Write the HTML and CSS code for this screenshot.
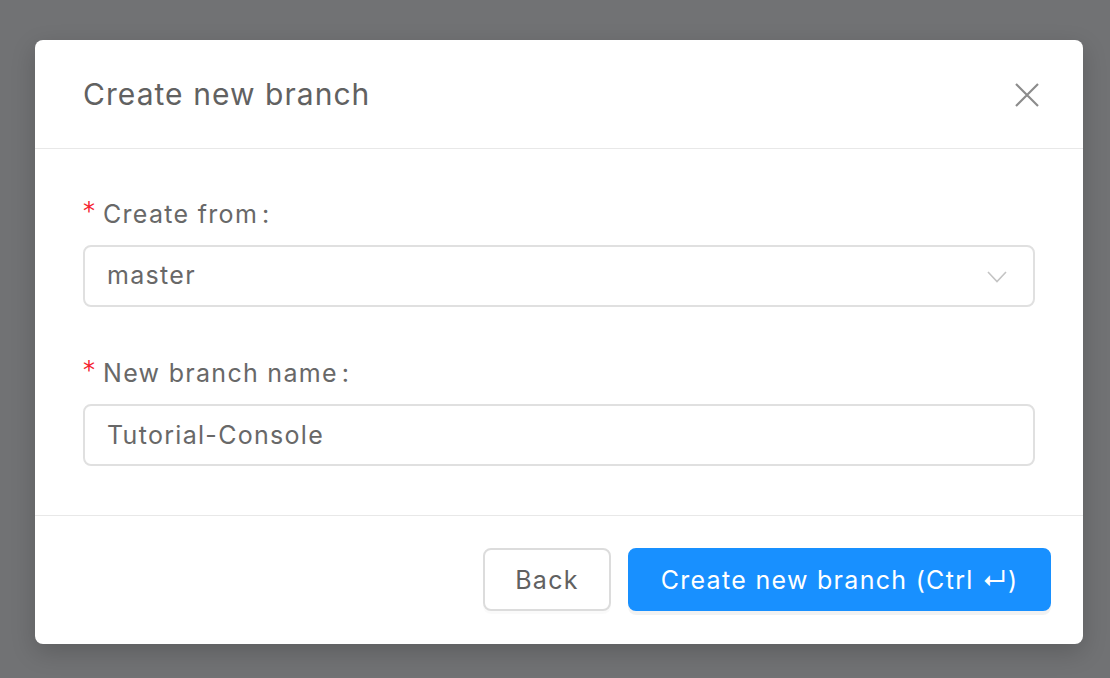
FILE: index.html
```html
<!DOCTYPE html>
<html>
<head>
<meta charset="utf-8">
<link rel="stylesheet" href="styles.css">
</head>
<body>
<div class="modal">
  <div class="modal-header">
    <div class="modal-title">Create new branch</div>
    <button class="modal-close" aria-label="Close">
      <svg width="24" height="24" viewBox="0 0 24 24"><path d="M1 1 L23 23 M23 1 L1 23" stroke="#8c8c8c" stroke-width="2.2" fill="none"/></svg>
    </button>
  </div>
  <div class="modal-body">
    <div class="form-item">
      <div class="form-label"><span class="req">*</span>Create from<span class="colon">:</span></div>
      <div class="select">
        <span class="select-value">master</span>
        <svg class="chevron" width="20" height="12" viewBox="0 0 20 12"><path d="M1 1 L10 10.5 L19 1" stroke="#c4c4c4" stroke-width="1.6" fill="none"/></svg>
      </div>
    </div>
    <div class="form-item second">
      <div class="form-label"><span class="req">*</span>New branch name<span class="colon">:</span></div>
      <div class="input">Tutorial-Console</div>
    </div>
  </div>
  <div class="modal-footer">
    <button class="btn btn-default">Back</button>
    <button class="btn btn-primary">Create new branch (Ctrl ↵)</button>
  </div>
</div>
</body>
</html>
```
FILE: styles.css
```css
html, body {
  margin: 0;
  padding: 0;
}
body {
  background: #717274;
  width: 1110px;
  height: 678px;
  overflow: hidden;
  font-family: Inter, "Noto Sans", sans-serif;
}
.modal {
  margin: 40px 0 0 35px;
  width: 1048px;
  height: 604px;
  background: #fff;
  border-radius: 8px;
  box-shadow: 0 8px 24px rgba(0, 0, 0, 0.18);
  display: flex;
  flex-direction: column;
}
.modal-header {
  height: 108px;
  border-bottom: 1px solid #e8e8e8;
  display: flex;
  align-items: center;
  justify-content: space-between;
  padding: 0 44px 0 48px;
}
.modal-title {
  font-size: 30px;
  letter-spacing: 1.05px;
  color: #616161;
  line-height: 40px;
}
.modal-close {
  border: 0;
  background: none;
  padding: 0;
  width: 24px;
  height: 24px;
  display: flex;
  margin-top: 2px;
}
.modal-body {
  padding: 45px 48px 49px 48px;
  border-bottom: 1px solid #e8e8e8;
}
.form-item.second {
  margin-top: 46px;
}
.form-label {
  font-size: 25px;
  letter-spacing: 1.3px;
  line-height: 40px;
  height: 40px;
  color: #686868;
  margin-bottom: 11px;
  display: flex;
  align-items: center;
}
.req {
  color: #f5222d;
  font-family: "DejaVu Sans", sans-serif;
  font-size: 24px;
  margin-right: 8px;
  position: relative;
  top: -3px;
  letter-spacing: 0;
}
.colon {
  margin-left: 4px;
}
.select, .input {
  height: 62px;
  box-sizing: border-box;
  border: 2px solid #e0e0e0;
  border-radius: 8px;
  display: flex;
  align-items: center;
  padding: 0 22px;
  font-size: 25px;
  letter-spacing: 1.3px;
  color: #686868;
}
.select {
  justify-content: space-between;
  padding-right: 26px;
}
.select-value {
  margin-top: -2px;
}
.chevron {
  margin-top: 2px;
}
.modal-footer {
  flex: 1;
  display: flex;
  justify-content: flex-end;
  align-items: flex-start;
  gap: 17px;
  padding: 32px 32px 0 0;
}
.btn {
  height: 63px;
  box-sizing: border-box;
  border-radius: 8px;
  font-family: Inter, "Noto Sans", sans-serif;
  font-size: 25px;
  letter-spacing: 1.3px;
  padding: 0;
  cursor: pointer;
}
.btn-default {
  width: 128px;
  background: #fff;
  border: 2px solid #dcdcdc;
  color: #616161;
  box-shadow: 0 3px 0 rgba(0, 0, 0, 0.02);
}
.btn-primary {
  width: 423px;
  background: #1890ff;
  border: 2px solid #1890ff;
  color: #fff;
  box-shadow: 0 4px 0 rgba(0, 0, 0, 0.05);
}
```
